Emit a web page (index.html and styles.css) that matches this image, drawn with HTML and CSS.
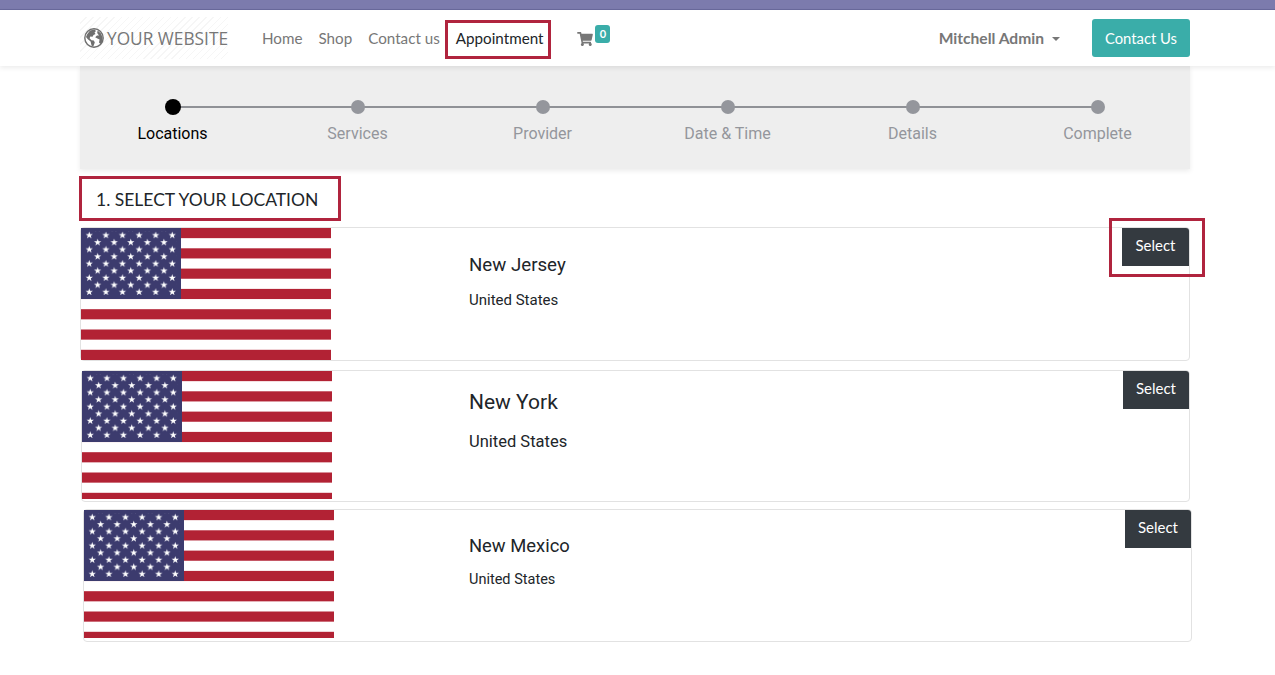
FILE: index.html
```html
<!DOCTYPE html>
<html>
<head>
    <meta charset="utf-8">
    <title>Appointment</title>
    <link rel="stylesheet" href="styles.css">
</head>
<body>
    <svg class="defs" width="0" height="0">
        <defs>
            <pattern id="stars" patternUnits="userSpaceOnUse" x="4.15" y="3.55" width="16.6" height="14.2">
                <polygon fill="#fff" points="4.15,0 5.05,2.5 7.75,2.55 5.6,4.2 6.4,6.8 4.15,5.25 1.9,6.8 2.7,4.2 0.55,2.55 3.25,2.5"/>
                <polygon fill="#fff" transform="translate(8.3 7.1)" points="4.15,0 5.05,2.5 7.75,2.55 5.6,4.2 6.4,6.8 4.15,5.25 1.9,6.8 2.7,4.2 0.55,2.55 3.25,2.5"/>
            </pattern>
            <symbol id="flag" viewBox="0 0 250 132">
                <rect width="250" height="132" fill="#fff"/>
                <rect y="0" width="250" height="10.15" fill="#b22234"/>
                <rect y="20.3" width="250" height="10.15" fill="#b22234"/>
                <rect y="40.6" width="250" height="10.15" fill="#b22234"/>
                <rect y="60.9" width="250" height="10.15" fill="#b22234"/>
                <rect y="81.2" width="250" height="10.15" fill="#b22234"/>
                <rect y="101.5" width="250" height="10.15" fill="#b22234"/>
                <rect y="121.8" width="250" height="10.2" fill="#b22234"/>
                <rect width="100" height="71" fill="#3c3b6e"/>
                <rect x="4" y="3.5" width="92" height="63.5" fill="url(#stars)"/>
            </symbol>
        </defs>
    </svg>

    <div class="topbar"></div>
    <header class="header">
        <div class="header-inner">
            <a class="logo">
                <svg class="globe" viewBox="0 0 20 20">
                    <circle cx="10" cy="10" r="9.2" fill="#fff" stroke="#6f6f6f" stroke-width="1.4"/>
                    <path fill="#6f6f6f" d="M3 6.5 6 2.6 10.5 1.5 12 3 10.5 4.6 11.5 6 9.5 7 8.5 8.8 6.3 8.6 5.6 10.2 7.5 12.2 9.8 12.6 10.8 14.6 9.4 18.2 7.6 17.8 6.6 13.6 3.6 11 2 9Z"/>
                    <path fill="#6f6f6f" d="M13.6 2.6 17 5.4 18.6 9.4 18.4 13.4 16.4 16 15 14.6 15.6 11.6 13.4 10.6 11.2 9.2 13 7.4 15 7.4 13.2 5Z"/>
                </svg>
                <span>YOUR WEBSITE</span>
            </a>
            <nav class="nav">
                <a class="nav-link">Home</a>
                <a class="nav-link">Shop</a>
                <a class="nav-link">Contact us</a>
                <a class="nav-link nav-active">Appointment</a>
            </nav>
            <a class="cart">
                <svg class="cart-icon" viewBox="0 0 576 512">
                    <path fill="#777" d="M528 301l47-208c3-15-8-29-23-29H159l-9-47C148 7 138 0 127 0H24C11 0 0 11 0 24v16c0 13 11 24 24 24h70l70 343c-17 10-28 28-28 49 0 31 25 56 56 56s56-25 56-56c0-16-6-30-17-40h210c-11 10-17 24-17 40 0 31 25 56 56 56s56-25 56-56c0-22-13-41-32-51l6-24c3-15-8-29-23-29H212l-7-32h300c11 0 21-8 23-19z"/>
                </svg>
                <span class="cart-badge">0</span>
            </a>
            <div class="header-right">
                <a class="user">Mitchell Admin<span class="caret"></span></a>
                <a class="contact-btn">Contact Us</a>
            </div>
        </div>
    </header>

    <main class="main">
        <section class="steps">
            <div class="step step-active"><span class="dot"></span><span class="step-label">Locations</span></div>
            <div class="step"><span class="dot"></span><span class="step-label">Services</span></div>
            <div class="step"><span class="dot"></span><span class="step-label">Provider</span></div>
            <div class="step"><span class="dot"></span><span class="step-label">Date &amp; Time</span></div>
            <div class="step"><span class="dot"></span><span class="step-label">Details</span></div>
            <div class="step"><span class="dot"></span><span class="step-label">Complete</span></div>
        </section>

        <h2 class="section-title">1. SELECT YOUR LOCATION</h2>

        <article class="card card-jersey">
            <svg class="flag"><use href="#flag" width="250" height="132"/></svg>
            <div class="card-info">
                <h3 class="city">New Jersey</h3>
                <p class="country">United States</p>
            </div>
            <a class="select-btn">Select</a>
            <span class="select-mark"></span>
        </article>

        <article class="card card-york">
            <svg class="flag"><use href="#flag" width="250" height="132"/></svg>
            <div class="card-info">
                <h3 class="city">New York</h3>
                <p class="country">United States</p>
            </div>
            <a class="select-btn">Select</a>
        </article>

        <article class="card card-mexico">
            <svg class="flag"><use href="#flag" width="250" height="132"/></svg>
            <div class="card-info">
                <h3 class="city">New Mexico</h3>
                <p class="country">United States</p>
            </div>
            <a class="select-btn">Select</a>
        </article>
    </main>
</body>
</html>
```

FILE: styles.css
```css
body {
    margin: 0;
    height: 675px;
    overflow: hidden;
    background-color: #ffffff;
    font-family: "Lato", "Open Sans", sans-serif;
    font-size: 15.2px;
    color: #212529;
}

a {
    text-decoration: none;
}

.defs {
    display: block;
    height: 0;
}

.topbar {
    height: 9px;
    background-color: #7c7bad;
    border-bottom: 1px solid #6a6a9c;
}

.header {
    position: relative;
    z-index: 2;
    height: 56px;
    background-color: #ffffff;
    box-shadow: 0 2px 5px rgba(0, 0, 0, 0.08);
}

.header-inner {
    display: flex;
    align-items: center;
    width: 1110px;
    height: 56px;
    margin-left: 80px;
}

.logo {
    display: flex;
    align-items: center;
    gap: 3px;
    width: 144px;
    height: 42px;
    padding-left: 4px;
    margin-right: 26px;
    color: #777777;
    font-family: "Open Sans", sans-serif;
    font-size: 17.3px;
    white-space: nowrap;
    background-image: repeating-linear-gradient(135deg, #ffffff 0, #ffffff 4px, #f6f6f6 4px, #f6f6f6 5px);
}

.globe {
    width: 20px;
    height: 20px;
    flex-shrink: 0;
}

.nav {
    display: flex;
    align-items: baseline;
    margin-top: 3px;
}

.nav-link {
    padding: 0 8px;
    color: #777777;
    line-height: 24px;
}

.nav-active {
    margin-left: -3px;
    padding: 3px 5px 6px 8px;
    border: 3px solid #b0243e;
    color: #212529;
}

.cart {
    display: flex;
    align-items: flex-start;
    align-self: flex-start;
    margin-top: 15px;
    margin-left: 26px;
}

.cart-icon {
    width: 16px;
    height: 14px;
    margin-top: 7px;
}

.cart-badge {
    width: 15px;
    height: 18px;
    margin-left: 2px;
    border-radius: 3px;
    background-color: #3aada9;
    color: #ffffff;
    font-size: 11px;
    font-weight: 700;
    line-height: 18px;
    text-align: center;
}

.header-right {
    display: flex;
    align-items: center;
    margin-left: auto;
}

.user {
    color: #777777;
    font-size: 15.6px;
    font-weight: 700;
}

.caret {
    display: inline-block;
    margin-left: 8px;
    vertical-align: 3px;
    border-top: 4px solid #777777;
    border-left: 4px solid transparent;
    border-right: 4px solid transparent;
}

.contact-btn {
    width: 98px;
    height: 38px;
    margin-left: 32px;
    border-radius: 3px;
    background-color: #3aada9;
    color: #ffffff;
    font-size: 14.8px;
    line-height: 38px;
    text-align: center;
}

.main {
    width: 1110px;
    margin-left: 80px;
}

.steps {
    display: grid;
    grid-template-columns: repeat(6, 185px);
    height: 103px;
    background-color: #eeeeee;
    box-shadow: 0 2px 5px rgba(0, 0, 0, 0.08);
    font-family: "Roboto", sans-serif;
}

.step {
    position: relative;
    display: flex;
    flex-direction: column;
    align-items: center;
    padding-top: 33px;
    color: #94969c;
}

.step::after {
    content: "";
    position: absolute;
    top: 40px;
    left: 50%;
    width: 100%;
    height: 2px;
    background-color: #8f9196;
}

.step:last-child::after {
    display: none;
}

.dot {
    position: relative;
    z-index: 1;
    width: 14px;
    height: 14px;
    margin-top: 1px;
    margin-bottom: 10px;
    border-radius: 50%;
    background-color: #94969c;
}

.step-label {
    font-size: 16px;
    line-height: 19px;
}

.step-active {
    color: #000000;
}

.step-active .dot {
    width: 16px;
    height: 16px;
    margin-top: 0;
    margin-bottom: 9px;
    background-color: #000000;
}

.section-title {
    box-sizing: border-box;
    width: 262px;
    height: 45px;
    margin: 7px 0 6px -1px;
    padding-left: 14px;
    border: 3px solid #b0243e;
    font-family: "Lato", sans-serif;
    font-size: 17.5px;
    font-weight: 400;
    line-height: 41px;
    white-space: nowrap;
}

.card {
    position: relative;
    display: flex;
    box-sizing: border-box;
    border: 1px solid #e2e2e2;
    border-radius: 4px;
    font-family: "Roboto", sans-serif;
}

.card-jersey {
    width: 1110px;
    height: 134px;
}

.card-york {
    width: 1109px;
    height: 132px;
    margin-top: 9px;
    margin-left: 1px;
}

.card-mexico {
    width: 1109px;
    height: 133px;
    margin-top: 7px;
    margin-left: 3px;
}

.flag {
    width: 250px;
    height: 128px;
    flex-shrink: 0;
}

.card-jersey .flag {
    height: 132px;
}

.card-info {
    margin-left: 138px;
}

.city {
    margin: 0;
    font-weight: 400;
    font-size: 18.7px;
    line-height: 22px;
}

.country {
    margin: 0;
    font-size: 15px;
    line-height: 18px;
}

.card-jersey .card-info {
    padding-top: 26px;
}

.card-jersey .country {
    margin-top: 15px;
}

.card-york .card-info {
    margin-left: 137px;
    padding-top: 18px;
}

.card-york .city {
    font-size: 21px;
    line-height: 26px;
}

.card-york .country {
    margin-top: 16px;
    font-size: 16.5px;
    line-height: 22px;
}

.card-mexico .card-info {
    margin-left: 135px;
    padding-top: 25px;
}

.card-mexico .city {
    font-size: 18.4px;
}

.card-mexico .country {
    margin-top: 14px;
    font-size: 14.5px;
}

.select-btn {
    width: 66px;
    height: 38px;
    margin-left: auto;
    border-radius: 0 3px 0 0;
    background-color: #343a40;
    color: #ffffff;
    font-family: "Lato", sans-serif;
    font-size: 15px;
    line-height: 34px;
    text-align: center;
}

.card-jersey .select-btn {
    width: 67px;
}

.select-mark {
    position: absolute;
    top: -10px;
    right: -16px;
    box-sizing: border-box;
    width: 96px;
    height: 59px;
    border: 3px solid #b0243e;
}
```
